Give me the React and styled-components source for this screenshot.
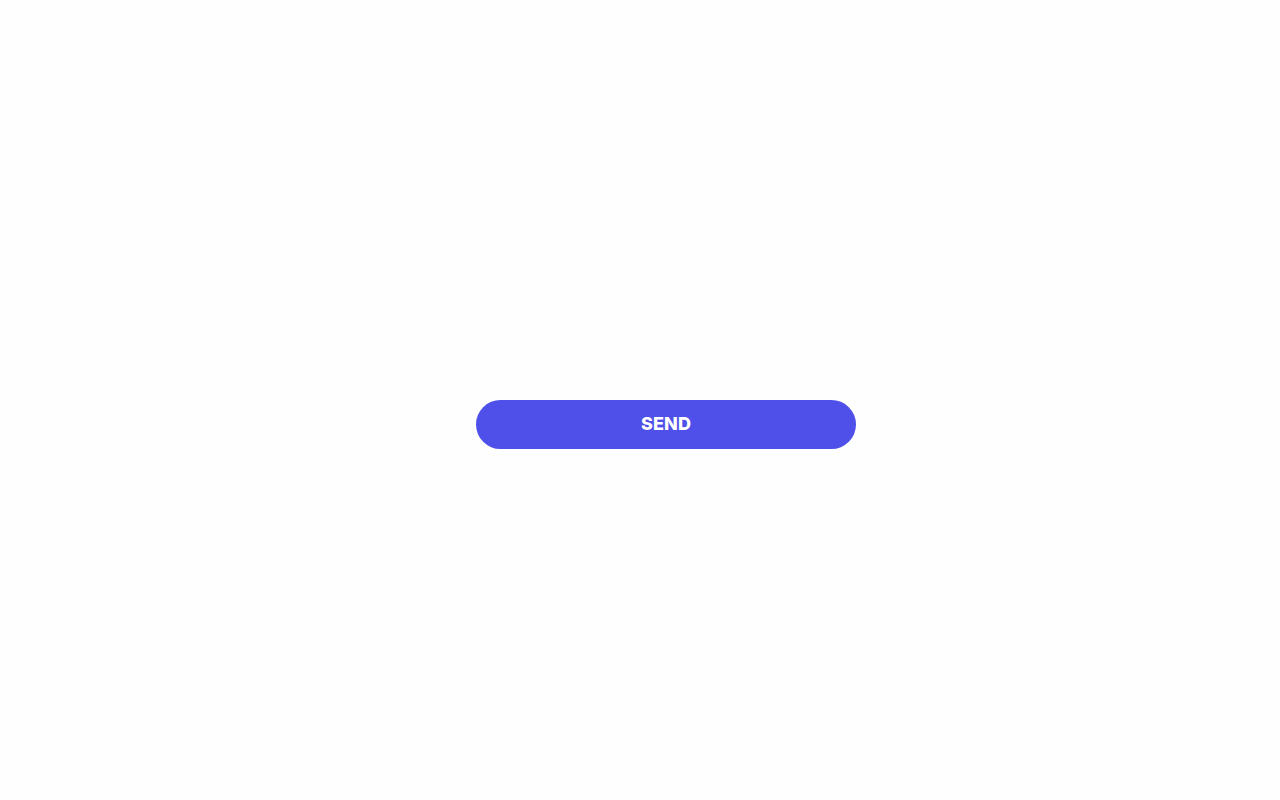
import React from "react";
import styled, { createGlobalStyle } from "styled-components";

const Global = createGlobalStyle`
  html, body { margin: 0; padding: 0; background: #fefefe; }
  body { font-family: "Inter", "Open Sans", sans-serif; }
`;

const Page = styled.div`
  width: 1280px;
  height: 800px;
  display: flex;
  align-items: flex-start;
  justify-content: center;
  box-sizing: border-box;
  padding-top: 400px;
  padding-left: 52px;
`;

const SendButton = styled.button`
  width: 380px;
  height: 49px;
  border: none;
  border-radius: 25px;
  background: #4f50e9;
  color: #ffffff;
  font-family: "Inter", "Open Sans", sans-serif;
  font-weight: 800;
  font-size: 18px;
  letter-spacing: 0.1px;
  display: flex;
  align-items: center;
  justify-content: center;
  padding: 0 0 2px 0;
  cursor: pointer;
`;

export default function App() {
  return (
    <>
      <Global />
      <Page>
        <SendButton type="button">SEND</SendButton>
      </Page>
    </>
  );
}
